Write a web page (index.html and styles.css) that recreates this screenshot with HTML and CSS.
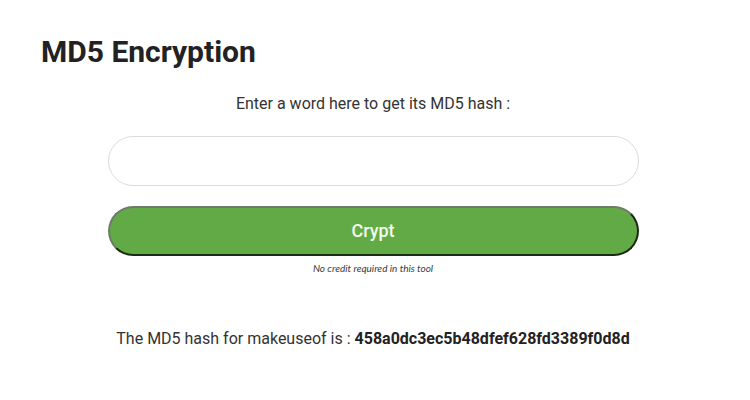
FILE: index.html
```html
<!DOCTYPE html>
<html>
<head>
<meta charset="utf-8">
<link rel="stylesheet" href="styles.css">
</head>
<body>
<main class="page">
  <h1 class="title">MD5 Encryption</h1>
  <section class="tool">
    <p class="prompt">Enter a word here to get its MD5 hash :</p>
    <form class="form">
      <input class="field" type="text">
      <button class="crypt" type="button">Crypt</button>
      <p class="note">No credit required in this tool</p>
    </form>
    <p class="result">The MD5 hash for makeuseof is : <strong>458a0dc3ec5b48dfef628fd3389f0d8d</strong></p>
  </section>
</main>
</body>
</html>
```
FILE: styles.css
```css
html, body {
  margin: 0;
  padding: 0;
  background: #fff;
}
body {
  font-family: Roboto, "Liberation Sans", sans-serif;
  color: #333;
}
.page {
  padding: 32px 45px 0 41px;
}
.title {
  margin: 0;
  font-size: 30px;
  font-weight: 700;
  line-height: 40px;
  color: #222;
}
.tool {
  display: flex;
  flex-direction: column;
  align-items: center;
}
.prompt {
  margin: 22px 0 0;
  font-size: 16px;
  line-height: 20px;
}
.form {
  width: 531px;
  display: flex;
  flex-direction: column;
  align-items: center;
  margin-top: 22px;
}
.field {
  box-sizing: border-box;
  width: 100%;
  height: 50px;
  border: 1px solid #dcdcdc;
  border-radius: 25px;
  background: #fff;
  outline: none;
  margin: 0;
}
.crypt {
  box-sizing: border-box;
  width: 100%;
  height: 50px;
  margin-top: 20px;
  border: 2px solid;
  border-color: #6f7a68 #1b2a12 #1b2a12 #6f7a68;
  border-radius: 25px;
  background: #62aa45;
  color: #f4fbee;
  font-family: Roboto, "Liberation Sans", sans-serif;
  font-size: 18px;
  font-weight: 500;
  padding-bottom: 2px;
}
.note {
  margin: 6px 0 0;
  font-family: Lato, "Open Sans", sans-serif;
  font-style: italic;
  font-weight: 400;
  font-size: 10px;
  line-height: 12px;
  color: #3a3a3a;
}
.result {
  margin: 55px 0 0;
  font-size: 16px;
  line-height: 20px;
}
.result strong {
  font-weight: 700;
  color: #222;
}
```
